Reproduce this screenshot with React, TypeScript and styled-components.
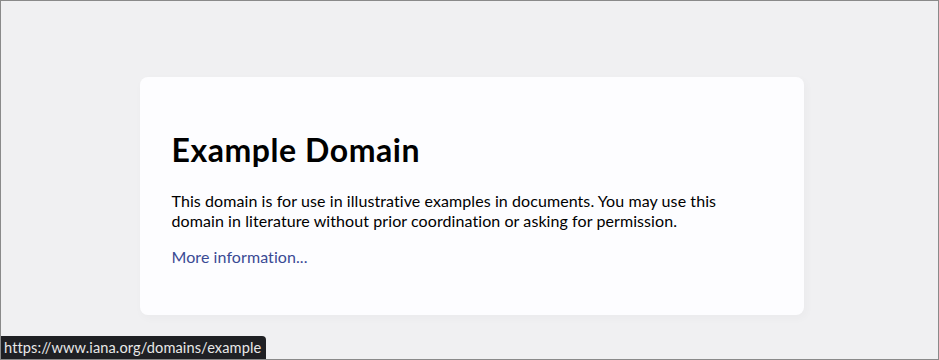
import React from 'react';
import styled, { createGlobalStyle } from 'styled-components';

const GlobalStyle = createGlobalStyle`
  html, body {
    margin: 0;
    padding: 0;
    height: 100%;
  }
  body {
    background-color: #f0f0f2;
    font-family: Lato, "Noto Sans", "Liberation Sans", sans-serif;
  }
`;

const Frame = styled.div`
  position: relative;
  box-sizing: border-box;
  height: 360px;
  border: 1px solid #8a8a8a;
  background: #f0f0f2;
  overflow: hidden;
  padding: 76px 0 0 4px;
`;

const Card = styled.div`
  width: 600px;
  margin: 0 auto;
  padding: 2em;
  background-color: #fdfdff;
  border-radius: 0.5em;
  box-shadow: 2px 3px 7px 2px rgba(0, 0, 0, 0.02);
`;

const Title = styled.h1`
  font-size: 2em;
  margin: 0.67em 0;
  letter-spacing: 0.55px;
  color: #000;
`;

const Text = styled.p`
  margin: 1em 0;
  font-size: 16px;
  line-height: 20px;
  letter-spacing: 0.08px;
  color: #000;
`;

const Link = styled.a`
  color: #3a4a94;
  text-decoration: none;
`;

const StatusTip = styled.div`
  position: absolute;
  left: 0;
  bottom: 0;
  padding: 2px 5px 2px 3px;
  background: #1f2024;
  color: #e8e8e8;
  font-size: 14.6px;
  line-height: 19px;
  letter-spacing: 0.1px;
  border-top-right-radius: 4px;
`;

function App() {
  return (
    <>
      <GlobalStyle />
      <Frame>
        <Card>
          <Title>Example Domain</Title>
          <Text>
            This domain is for use in illustrative examples in documents. You may use this
            domain in literature without prior coordination or asking for permission.
          </Text>
          <Text>
            <Link href="https://www.iana.org/domains/example">More information...</Link>
          </Text>
        </Card>
        <StatusTip>https://www.iana.org/domains/example</StatusTip>
      </Frame>
    </>
  );
}

export default App;
